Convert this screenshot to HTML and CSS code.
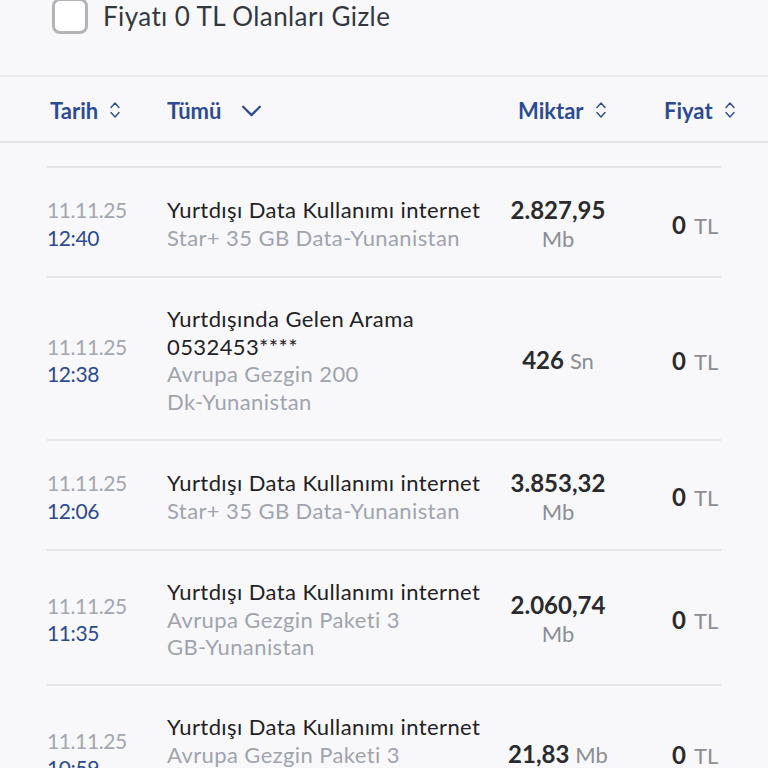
FILE: index.html
```html
<!DOCTYPE html>
<html lang="tr">
<head>
<meta charset="utf-8">
<link rel="stylesheet" href="styles.css">
</head>
<body>
<div class="filter">
  <span class="checkbox"></span>
  <span class="filter-label">Fiyatı 0 TL Olanları Gizle</span>
</div>
<div class="header">
  <div class="h-item">Tarih <svg class="sort" viewBox="0 0 14 20" width="14" height="20"><path d="M3 7.5 L7 3 L11 7.5 M3 12.5 L7 17 L11 12.5" fill="none" stroke="#2d4b95" stroke-width="1.4" stroke-linecap="round" stroke-linejoin="round"/></svg></div>
  <div class="h-item">Tümü <svg class="down" viewBox="0 0 22 14" width="21" height="13"><path d="M2 3 L11 12 L20 3" fill="none" stroke="#2d4b95" stroke-width="2.4" stroke-linecap="round" stroke-linejoin="round"/></svg></div>
  <div class="h-item">Miktar <svg class="sort" viewBox="0 0 14 20" width="14" height="20"><path d="M3 7.5 L7 3 L11 7.5 M3 12.5 L7 17 L11 12.5" fill="none" stroke="#2d4b95" stroke-width="1.4" stroke-linecap="round" stroke-linejoin="round"/></svg></div>
  <div class="h-item">Fiyat <svg class="sort" viewBox="0 0 14 20" width="14" height="20"><path d="M3 7.5 L7 3 L11 7.5 M3 12.5 L7 17 L11 12.5" fill="none" stroke="#2d4b95" stroke-width="1.4" stroke-linecap="round" stroke-linejoin="round"/></svg></div>
</div>
<div class="list">
  <div class="row">
    <div class="date"><span class="d">11.11.25</span><span class="t">12:40</span></div>
    <div class="desc"><span class="title">Yurtdışı Data Kullanımı internet</span><span class="sub">Star+ 35 GB <span class="nw">Data-Yunanistan</span></span></div>
    <div class="amount"><span class="num">2.827,95</span><span class="unit">Mb</span></div>
    <div class="price"><span class="num">0</span><span class="unit">TL</span></div>
  </div>
  <div class="row">
    <div class="date"><span class="d">11.11.25</span><span class="t">12:38</span></div>
    <div class="desc"><span class="title">Yurtdışında Gelen Arama 0532453****</span><span class="sub">Avrupa Gezgin 200 <span class="nw">Dk-Yunanistan</span></span></div>
    <div class="amount inline"><span class="num">426</span><span class="unit">Sn</span></div>
    <div class="price"><span class="num">0</span><span class="unit">TL</span></div>
  </div>
  <div class="row">
    <div class="date"><span class="d">11.11.25</span><span class="t">12:06</span></div>
    <div class="desc"><span class="title">Yurtdışı Data Kullanımı internet</span><span class="sub">Star+ 35 GB <span class="nw">Data-Yunanistan</span></span></div>
    <div class="amount"><span class="num">3.853,32</span><span class="unit">Mb</span></div>
    <div class="price"><span class="num">0</span><span class="unit">TL</span></div>
  </div>
  <div class="row">
    <div class="date"><span class="d">11.11.25</span><span class="t">11:35</span></div>
    <div class="desc"><span class="title">Yurtdışı Data Kullanımı internet</span><span class="sub">Avrupa Gezgin Paketi 3 <span class="nw">GB-Yunanistan</span></span></div>
    <div class="amount"><span class="num">2.060,74</span><span class="unit">Mb</span></div>
    <div class="price"><span class="num">0</span><span class="unit">TL</span></div>
  </div>
  <div class="row">
    <div class="date"><span class="d">11.11.25</span><span class="t">10:59</span></div>
    <div class="desc"><span class="title">Yurtdışı Data Kullanımı internet</span><span class="sub">Avrupa Gezgin Paketi 3 <span class="nw">GB-Yunanistan</span></span></div>
    <div class="amount inline"><span class="num">21,83</span><span class="unit">Mb</span></div>
    <div class="price"><span class="num">0</span><span class="unit">TL</span></div>
  </div>
</div>
</body>
</html>
```
FILE: styles.css
```css
html, body {
  margin: 0;
  padding: 0;
  background: #f8f8fa;
  font-family: "Lato", "Noto Sans", sans-serif;
  overflow: hidden;
  height: 768px;
}
.filter {
  display: flex;
  align-items: center;
  height: 36px;
  margin-top: -2px;
  padding-left: 52px;
  gap: 15px;
}
.checkbox {
  width: 30px;
  height: 30px;
  border: 3px solid #b4b4b6;
  border-radius: 8px;
  background: #ffffff;
}
.filter-label {
  font-size: 26px;
  letter-spacing: 0.4px;
  color: #333840;
}
.header {
  margin-top: 41px;
  height: 64px;
  border-top: 2px solid #ebebee;
  border-bottom: 2px solid #e4e4e7;
  display: grid;
  grid-template-columns: 117px 351px 146px auto;
  align-items: center;
  padding-left: 50px;
  font-weight: 700;
  font-size: 22px;
  color: #2d4b95;
}
.h-item {
  display: flex;
  align-items: center;
  padding-top: 2px;
}
.sort { margin-left: 10px; }
.down { margin-left: 20px; }
.list {
  margin: 0 47px;
  padding-top: 23px;
}
.row {
  display: grid;
  grid-template-columns: 120px 330px 122px 1fr;
  align-items: center;
  border-top: 2px solid #e6e6e9;
  padding: 27px 0 23px;
}
.date, .desc {
  display: flex;
  flex-direction: column;
  font-size: 22px;
  line-height: 27.7px;
  letter-spacing: 0.4px;
}
.date { font-size: 21px; letter-spacing: -0.4px; }
.d { color: #a3a7b1; }
.t { color: #2b4a90; }
.title { color: #1f2226; }
.sub { color: #9fa4ae; }
.nw { white-space: nowrap; }
.amount {
  display: flex;
  flex-direction: column;
  align-items: center;
  line-height: 29px;
}
.amount.inline {
  flex-direction: row;
  justify-content: center;
  align-items: baseline;
  gap: 6px;
}
.amount .num, .price .num {
  font-weight: 700;
  font-size: 24px;
  color: #2a2b2e;
}
.amount .unit, .price .unit {
  font-size: 22px;
  color: #8c8e93;
}
.price {
  padding-left: 53px;
  white-space: nowrap;
  display: flex;
  align-items: baseline;
  gap: 8px;
}
```
